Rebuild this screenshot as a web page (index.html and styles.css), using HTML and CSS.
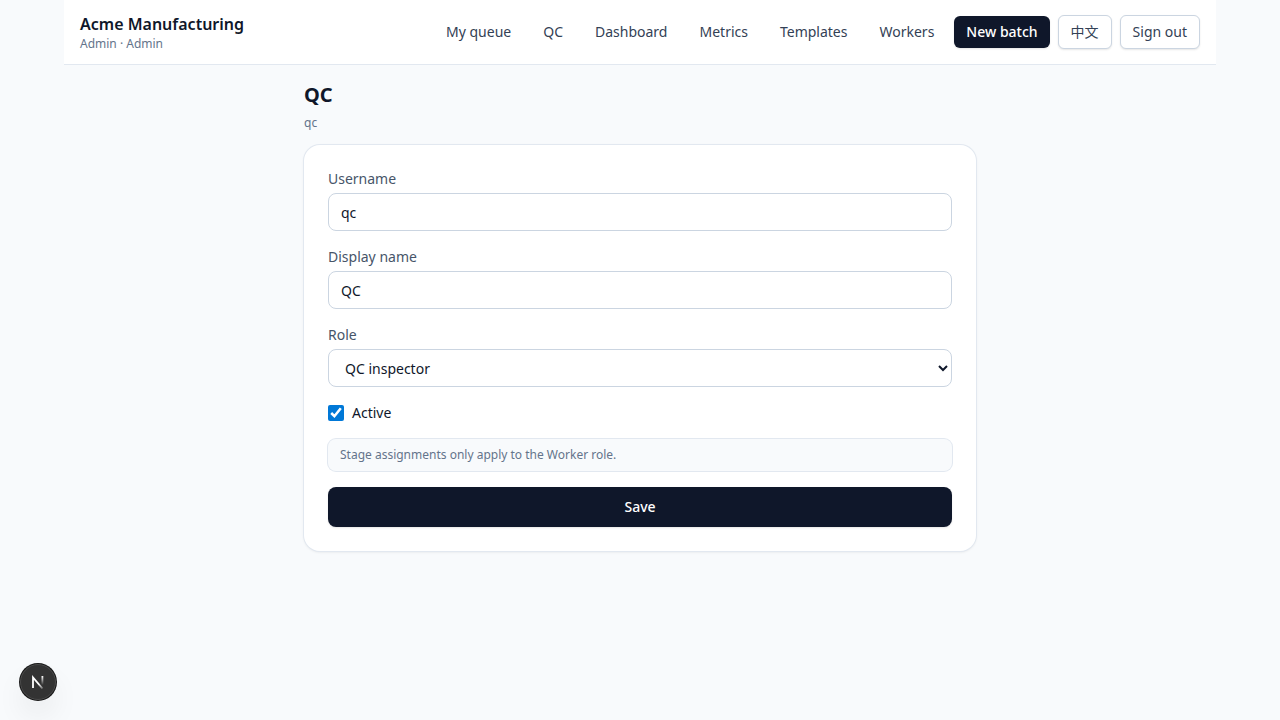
FILE: index.html
```html
<!DOCTYPE html>
<html lang="en">
<head>
  <meta charset="UTF-8">
  <meta name="viewport" content="width=device-width, initial-scale=1.0">
  <title>QC - Acme Manufacturing</title>
  <link rel="stylesheet" href="styles.css">
</head>
<body>
  <header class="topbar">
    <div class="brand">
      <div class="brand-name">Acme Manufacturing</div>
      <div class="brand-user">Admin · Admin</div>
    </div>
    <nav class="nav">
      <a class="nav-link" href="#">My queue</a>
      <a class="nav-link" href="#">QC</a>
      <a class="nav-link" href="#">Dashboard</a>
      <a class="nav-link" href="#">Metrics</a>
      <a class="nav-link" href="#">Templates</a>
      <a class="nav-link" href="#">Workers</a>
      <a class="btn-dark" href="#">New batch</a>
      <button class="btn-light" type="button" lang="zh">中文</button>
      <button class="btn-light" type="button">Sign out</button>
    </nav>
  </header>

  <main class="page">
    <h1>QC</h1>
    <p class="subtitle">qc</p>

    <form class="card">
      <div class="field">
        <label for="username">Username</label>
        <input class="control" id="username" type="text" value="qc">
      </div>
      <div class="field">
        <label for="displayName">Display name</label>
        <input class="control" id="displayName" type="text" value="QC">
      </div>
      <div class="field">
        <label for="role">Role</label>
        <select class="control" id="role">
          <option>QC inspector</option>
        </select>
      </div>
      <label class="check" for="active">
        <input id="active" type="checkbox" checked>
        Active
      </label>
      <p class="note">Stage assignments only apply to the Worker role.</p>
      <button class="save" type="button">Save</button>
    </form>
  </main>

  <button class="dev-badge" type="button" aria-label="Dev tools">
    <svg width="14" height="14" viewBox="0 0 14 14" fill="none">
      <defs>
        <linearGradient id="fadeDiagonal" x1="2" y1="1" x2="12" y2="14" gradientUnits="userSpaceOnUse">
          <stop offset="0.6" stop-color="#fff"/>
          <stop offset="1" stop-color="#fff" stop-opacity="0.2"/>
        </linearGradient>
        <linearGradient id="fadeStem" x1="0" y1="1" x2="0" y2="10" gradientUnits="userSpaceOnUse">
          <stop stop-color="#fff"/>
          <stop offset="1" stop-color="#fff" stop-opacity="0"/>
        </linearGradient>
      </defs>
      <path d="M2 13V2.5L11.5 13.5" stroke="url(#fadeDiagonal)" stroke-width="1.8"/>
      <rect x="10.5" y="1" width="1.8" height="9" fill="url(#fadeStem)"/>
    </svg>
  </button>
</body>
</html>
```

FILE: styles.css
```css
* {
  box-sizing: border-box;
}

body {
  margin: 0;
  background: #f8fafc;
  color: #0f172a;
  font-family: "Noto Sans", "Noto Sans CJK SC", sans-serif;
  font-size: 14px;
  line-height: 20px;
}

h1, p {
  margin: 0;
}

button, input, select {
  font: inherit;
  color: inherit;
}

.topbar {
  display: flex;
  align-items: center;
  justify-content: space-between;
  max-width: 1152px;
  min-height: 65px;
  margin: 0 auto;
  padding: 12px 16px;
  background: #fff;
  border-bottom: 1px solid #e2e8f0;
}

.brand-name {
  font-size: 16px;
  font-weight: 600;
  line-height: 24px;
}

.brand-user {
  color: #64748b;
  font-size: 12px;
  line-height: 16px;
}

.nav {
  display: flex;
  align-items: center;
  gap: 8px;
  color: #334155;
}

.nav-link {
  padding: 6px 12px;
  color: #334155;
  text-decoration: none;
}

.btn-dark {
  padding: 6px 12px;
  border-radius: 6px;
  background: #0f172a;
  color: #fff;
  font-weight: 500;
  text-decoration: none;
  box-shadow: 0 1px 2px rgba(0, 0, 0, 0.1);
}

.btn-light {
  padding: 6px 12px;
  border: 1px solid #cbd5e1;
  border-radius: 6px;
  background: #fff;
  box-shadow: 0 1px 2px rgba(0, 0, 0, 0.1);
  cursor: pointer;
}

.page {
  max-width: 704px;
  margin: 0 auto;
  padding: 16px;
}

h1 {
  font-size: 20px;
  font-weight: 700;
  line-height: 28px;
}

.subtitle {
  margin: 4px 0 12px;
  color: #64748b;
  font-size: 12px;
}

.card {
  display: flex;
  flex-direction: column;
  gap: 16px;
  padding: 24px;
  border-radius: 16px;
  background: #fff;
  box-shadow: 0 0 0 1px #e2e8f0, 0 1px 3px rgba(0, 0, 0, 0.1);
}

.field {
  display: flex;
  flex-direction: column;
  gap: 4px;
}

.field label {
  color: #475569;
}

.control {
  width: 100%;
  height: 38px;
  padding: 8px 12px;
  border: 1px solid #cbd5e1;
  border-radius: 8px;
  background: #fff;
}

.check {
  display: flex;
  align-items: center;
  gap: 8px;
}

.check input {
  width: 16px;
  height: 16px;
  margin: 0;
  accent-color: #0078d7;
}

.note {
  padding: 8px 12px;
  border-radius: 8px;
  background: #f8fafc;
  color: #64748b;
  font-size: 12px;
  line-height: 16px;
  box-shadow: 0 0 0 1px #e2e8f0;
}

.save {
  padding: 10px 16px;
  border: none;
  border-radius: 8px;
  background: #0f172a;
  color: #fff;
  font-weight: 500;
  box-shadow: 0 1px 2px rgba(0, 0, 0, 0.1);
  cursor: pointer;
}

.dev-badge {
  position: fixed;
  left: 20px;
  bottom: 20px;
  display: flex;
  align-items: center;
  justify-content: center;
  width: 36px;
  height: 36px;
  padding: 0;
  border: 1px solid #4a4a4a;
  border-radius: 50%;
  background: #333;
  box-shadow: 0 0 0 1px #171717, 0 16px 32px -8px rgba(0, 0, 0, 0.2);
}
```
